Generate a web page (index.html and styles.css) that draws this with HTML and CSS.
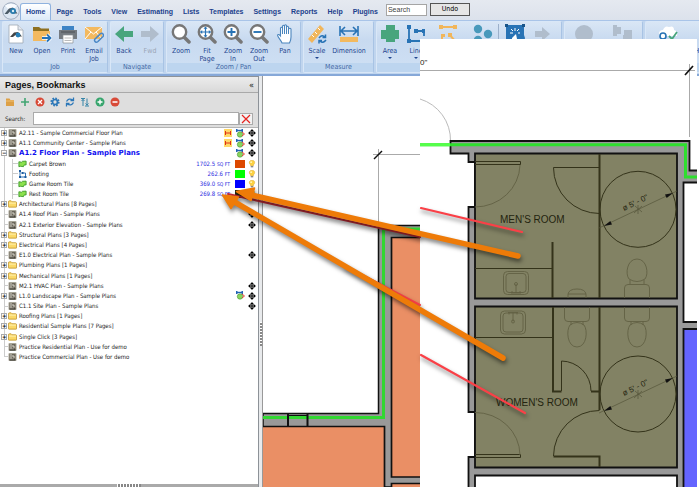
FILE: index.html
```html
<!DOCTYPE html>
<html lang="en">
<head>
<meta charset="utf-8">
<title>Sample Plans</title>
<link rel="stylesheet" href="styles.css">
</head>
<body>
<svg class="defs" aria-hidden="true">
  <defs>
    <symbol id="page" viewBox="0 0 8 8"><rect width="8" height="8" rx="1" fill="#a9a698"/><path d="M1 1h6v6H1z" fill="#6c675b"/><path d="M2.500 1v6M4.500 2v2h2M4.500 7V5.500" stroke="#e4e1d6" fill="none" stroke-width=".9"/><path d="M1 7h6" stroke="#292620"/></symbol>
    <symbol id="folder" viewBox="0 0 10 8"><path d="M.5 7V1.500Q.5.5 1.500.5H3.500L4.500 1.500H8.500Q9.500 1.500 9.500 2.500V7Q9.500 7.500 9 7.500H1Q.5 7.500.5 7Z" fill="#fbd968" stroke="#b98a1d" stroke-width=".8"/><path d="M1.200 3H8.800" stroke="#fff3b8"/></symbol>
    <symbol id="area" viewBox="0 0 10 8"><path d="M1 1.500 4 2 5 1 9 .8 9 5 7 5 6 7 3 6.500 1 7Z" fill="#8be04c" stroke="#3f9b2f"/></symbol>
    <symbol id="line" viewBox="0 0 8 8"><path d="M1.500 1V7H7M4 3H7V6" fill="none" stroke="#2b6fb5"/><path d="M.5 0h2v2h-2zM.5 6h2v2h-2zM6 6h2v2h-2zM3 2h2v2H3z" fill="#1c5c9f"/></symbol>
    <symbol id="scaled" viewBox="0 0 8 8"><rect width="8" height="8" fill="#ffd968"/><path d="M1.500 2v4M6.500 2v4M1.500 4h5" stroke="#e03218"/></symbol>
    <symbol id="takeoff" viewBox="0 0 9 9"><path d="M1 1.500H6" stroke="#2264b4" stroke-width="1.400"/><path d="M0 0h1.500v3H0zM5.500 0H7v3H5.500z" fill="#2264b4"/><circle cx="4" cy="5.500" r="2.700" fill="#8ad45b" stroke="#48943c" stroke-width=".6"/><path d="m6 3 2.500 2L6 7" stroke="#e83b32" fill="none"/></symbol>
    <symbol id="move" viewBox="0 0 8 8"><circle cx="4" cy="4" r="2.300" fill="none" stroke="#111" stroke-width=".8"/><path d="M4 1v6M1 4h6" stroke="#000"/><path d="m4 0 1.600 2H2.400ZM4 8 2.400 6h3.200ZM0 4l2-1.600v3.200ZM8 4 6 5.600V2.400Z"/></symbol>
    <symbol id="bulb" viewBox="0 0 8 9"><path d="M4 .3C.6.3.2 3.600 2.400 5.400V6.500H5.600V5.400C7.800 3.600 7.400.3 4 .3Z" fill="#fdd343" stroke="#d69b17" stroke-width=".5"/><circle cx="3" cy="2.500" r="1" fill="#fff6c4"/><path d="M2.600 7.500h2.800" stroke="#8a8a8a" stroke-width="1.600"/></symbol>
    <symbol id="lens" viewBox="0 0 20 20"><path d="m13 13 5 5" stroke="#777" stroke-width="3.500" stroke-linecap="round"/><circle cx="8.500" cy="8" r="6.700" fill="#fff" stroke="#777" stroke-width="2.400"/></symbol>
  </defs>
</svg>

<header class="top">
  <div class="menubar">
    <svg class="logo" viewBox="0 0 18 18" aria-hidden="true"><circle cx="9" cy="9" r="8.300" fill="#dce6f2" stroke="#8d9bb0" stroke-width=".8"/><path d="M3 3.500Q9 0 15 3.500L12 7H6Z" fill="#f8fbff"/><path d="M2.500 12 7 6.500 11 5.500 15.500 11.500H11Q9 11 8 9.500L5.500 12Z" fill="#4b5a66"/><circle cx="11" cy="9" r="3" fill="#297cae"/><circle cx="11" cy="9" r="1.200" fill="#dcecf5"/></svg>
    <nav class="menu">
      <a class="tab" href="#">Home</a><a href="#">Page</a><a href="#">Tools</a><a href="#">View</a><a href="#">Estimating</a><a href="#">Lists</a><a href="#">Templates</a><a href="#">Settings</a><a href="#">Reports</a><a href="#">Help</a><a href="#">Plugins</a>
    </nav>
    <input class="find" type="text" placeholder="Search" aria-label="Search commands">
    <button class="undo" type="button">Undo</button>
  </div>
  <div class="ribbon">
    <section class="group">
      <div class="tools">
        <button type="button"><svg viewBox="0 0 20 20"><path d="M3 1h9l5 5v13H3Z" fill="#fff" stroke="#9fa8b4" stroke-width=".8"/><path d="M12 1v5h5" fill="#e4e8ee" stroke="#9fa8b4" stroke-width=".8"/><path d="M4 13 8 8.500 12 8 16 12.500H11L9.500 11 7 13Z" fill="#444"/><circle cx="12" cy="11" r="2.400" fill="#2780b8"/></svg><span>New</span></button>
        <button type="button"><svg viewBox="0 0 20 20"><path d="M1 7V3H7L9 4.500H17V8Z" fill="#8f7020"/><path d="M1 7H18V17H1Z" fill="#f3b95f"/><path d="M10 14h8M15 10.500l3.500 3.500-3.500 3.500" stroke="#fff" stroke-width="3.600" fill="none"/><path d="M10 14h8M15 10.500l3.500 3.500-3.500 3.500" stroke="#2673b9" stroke-width="1.800" fill="none"/></svg><span>Open</span></button>
        <button type="button"><svg viewBox="0 0 20 20"><path d="M4 2h12v4H4z" fill="#3d84c6"/><path d="M1 6h18v9H1z" fill="#747a80"/><path d="M3 8h14" stroke="#4c5055"/><path d="M5 11h10v8H5z" fill="#fff" stroke="#8a8f94" stroke-width=".7"/><path d="M6.500 14h7M6.500 16.500h7" stroke="#bbb"/></svg><span>Print</span></button>
        <button type="button"><svg viewBox="0 0 20 20"><path d="M1 3h17v12H1z" fill="#f3b95f"/><path d="m1 3 8.500 7L18 3M1 15l6-7M18 15l-6-7" fill="none" stroke="#fff" stroke-width="1"/><path d="m12 14 4-4q2-1.500 3 0 1 1.200 0 2.500l-5 5q-2 1.500-3 0-1-1.200 0-2.500l4.500-4" fill="none" stroke="#4a87c5" stroke-width="1.500"/></svg><span>Email<br>Job</span></button>
      </div><h2>Job</h2>
    </section>
    <section class="group">
      <div class="tools">
        <button type="button"><svg viewBox="0 0 20 20"><path d="m1 10 9-8v5h9v6h-9v5Z" fill="#48a57d"/></svg><span>Back</span></button>
        <button type="button" class="off"><svg viewBox="0 0 20 20"><path d="m19 10-9-8v5H1v6h9v5Z" fill="#b0bdcc"/></svg><span>Fwd</span></button>
      </div><h2>Navigate</h2>
    </section>
    <section class="group wide">
      <div class="tools">
        <button type="button"><svg viewBox="0 0 20 20"><use href="#lens"/></svg><span>Zoom</span></button>
        <button type="button"><svg viewBox="0 0 20 20"><use href="#lens"/><path d="M8.500 3v10M3.500 8h10" stroke="#2873b5" stroke-width="1.200"/><path d="m8.500 2.500 2 2.200h-4ZM8.500 13.500l-2-2.200h4ZM3 8l2.200-2v4ZM14 8l-2.200 2V6Z" fill="#2873b5"/></svg><span>Fit<br>Page</span></button>
        <button type="button"><svg viewBox="0 0 20 20"><use href="#lens"/><path d="M8.500 4v8M4.500 8h8" stroke="#2873b5" stroke-width="1.900"/></svg><span>Zoom<br>In</span></button>
        <button type="button"><svg viewBox="0 0 20 20"><use href="#lens"/><path d="M4.500 8h8" stroke="#2873b5" stroke-width="1.900"/></svg><span>Zoom<br>Out</span></button>
        <button type="button"><svg viewBox="0 0 20 20"><path d="M7 19C6 16 2.500 13 2.500 11q1-1.500 3 1V4q1-1.500 2 0V2q1-1.500 2 0V1.500q1-1.500 2 0V3q1-1.500 2 0V5q1.500-1.500 2.500 0V13Q16 16 14.500 19Z" fill="#fff" stroke="#4c86bd" stroke-width="1.100"/><path d="M7.500 4v6M9.500 2v8M11.500 3v7M13.500 5v5" stroke="#4c86bd"/></svg><span>Pan</span></button>
      </div><h2>Zoom / Pan</h2>
    </section>
    <section class="group measure">
      <div class="tools">
        <button type="button"><svg viewBox="0 0 20 20"><path d="m1 15 12-14 4 4L5 19Z" fill="#f1b65b"/><path d="m5 11 2 2m1-5 2 2m1-6 2 2" stroke="#fff"/><path d="M12 14q3-4 6-1M18.500 10.500v3h-3M19 16q-3 4-6 1M12 19.500v-3h3" fill="none" stroke="#2873b5" stroke-width="1.500"/></svg><span>Scale</span><i></i></button>
        <button type="button" class="long"><svg viewBox="0 0 20 20"><path d="M1 2v10M19 2v10M2 7h16M6 3 2 7l4 4M14 3l4 4-4 4" fill="none" stroke="#2873b5" stroke-width="1.600"/><path d="M1 13h18v5H1z" fill="#f3b95f"/></svg><span>Dimension</span></button>
      </div><h2>Measure</h2>
    </section>
    <section class="group takeoffs">
      <div class="tools">
        <button type="button"><svg viewBox="0 0 20 20"><path d="M6 1h9v5h4v9h-4v3H6v-3H1V6h5Z" fill="#48a57d"/></svg><span>Area</span><i></i></button>
        <button type="button"><svg viewBox="0 0 20 20"><path d="M3 2v15h15M9 7h9v5" fill="none" stroke="#2873b5" stroke-width="1.800"/><path d="M1 1h4v4H1zM1 15h4v4H1zM16 15h3v4h-3zM8 5h4v4H8zM16 5h3v4h-3z" fill="#2873b5"/></svg><span>Line</span><i></i></button>
        <button type="button" class="long" aria-label="Segment"><svg viewBox="0 0 20 20"><path d="M2 3h16M4 16v-5M11 10l6 7" stroke="#f1b65b" stroke-width="2"/><path d="M1 1h4v4H1zM15 1h4v4h-4zM3 10h4v3H3zM10 9h4v4h-4z" fill="#f1b65b"/></svg></button>
        <button type="button" class="ruled" aria-label="Count"><svg viewBox="0 0 20 20"><g fill="#4899bb"><circle cx="5" cy="5" r="4.200"/><circle cx="15" cy="10" r="4.200"/><circle cx="5" cy="16" r="4.200"/></g></svg></button>
        <button type="button" aria-label="Single Click"><svg viewBox="0 0 20 20"><path d="M1 1h18v10l1 3-1 5H1Z" fill="#2873b5"/><path d="M0 0h3v3H0zM17 0h3v3h-3z" fill="#195489"/><path d="M10 4v3M6 5l2 2M14 5l-2 2M5 9h3M15 9h-2" stroke="#fff"/><path d="M7 19v-5l4-4 1 5v4Z" fill="#fff"/></svg></button>
        <button type="button" aria-label="Next"><svg viewBox="0 0 20 20"><path d="m19 10-8-7v4H4v6h7v4Z" fill="#b0bdcc"/></svg></button>
      </div><h2></h2>
    </section>
    <section class="group shapes">
      <div class="tools">
        <button type="button" class="long" aria-label="Circle"><svg viewBox="0 0 20 20"><circle cx="10" cy="10" r="9" fill="#b0bdcc"/></svg></button>
        <button type="button" class="long" aria-label="Shapes"><svg viewBox="0 0 20 20"><path d="M1 1h4v2h4v7H5v2H1zM12 6h8v12h-9v-7h1z" fill="#b0bdcc"/></svg></button>
      </div><h2></h2>
    </section>
    <section class="group last">
      <div class="tools">
        <button type="button" class="long" aria-label="Cloud"><svg viewBox="0 0 20 20"><path d="M1 10Q1 6 5 6 7 1 11 3 16 1 16 6q4 1 3 6H1Z" fill="#fff"/><circle cx="5" cy="12" r="3" fill="#fff" stroke="#2873b5" stroke-width="1.600"/><path d="m11 12 3 3 5-7" fill="none" stroke="#48a57d" stroke-width="1.800"/></svg></button>
        <button type="button" class="cut"><span>H</span></button>
      </div><h2></h2>
    </section>
  </div>
</header>

<main class="work">
  <aside class="side">
    <div class="panel">
      <div class="head"><h1>Pages, Bookmarks</h1><button type="button" aria-label="Collapse panel">«</button></div>
      <div class="bar">
        <button type="button" aria-label="New folder"><svg viewBox="0 0 10 10"><path d="M1 9V1.500h3.500L5.500 3H9v6Z" fill="#dda046"/><path d="M1 4h8" stroke="#f3cd86" stroke-width=".7"/></svg></button>
        <button type="button" aria-label="Add"><svg viewBox="0 0 10 10"><path d="M5 1v8M1 5h8" stroke="#43a573" stroke-width="1.600"/></svg></button>
        <button type="button" aria-label="Delete"><svg viewBox="0 0 10 10"><circle cx="5" cy="5" r="4.500" fill="#d84a38"/><path d="m3 3 4 4M7 3 3 7" stroke="#fff" stroke-width="1.300"/></svg></button>
        <button type="button" aria-label="Settings"><svg viewBox="0 0 10 10"><circle cx="5" cy="5" r="3.600" fill="none" stroke="#2b77b8" stroke-width="2" stroke-dasharray="1.600 1.200"/><circle cx="5" cy="5" r="2.500" fill="none" stroke="#2b77b8" stroke-width="1.700"/></svg></button>
        <button type="button" aria-label="Refresh"><svg viewBox="0 0 10 10"><path d="M1.500 4.500Q3.500.5 8 3M8.500.5V3.500H5.500M8.500 5.500Q6.500 9.500 2 7M1.500 9.500V6.500H4.500" fill="none" stroke="#2b77b8" stroke-width="1.300"/></svg></button>
        <button type="button" aria-label="Sort"><svg viewBox="0 0 10 10"><path d="M1 1.500h4M3 2v7M5 9h4M7 8.500V1.500M1.500 4 3 2.500 4.500 4M5.500 6.500 7 8l1.500-1.500" fill="none" stroke="#3785a8" stroke-width="1"/></svg></button>
        <button type="button" aria-label="Expand all"><svg viewBox="0 0 10 10"><circle cx="5" cy="5" r="4.500" fill="#38a56d"/><path d="M5 2.500v5M2.500 5h5" stroke="#fff" stroke-width="1.400"/></svg></button>
        <button type="button" aria-label="Collapse all"><svg viewBox="0 0 10 10"><circle cx="5" cy="5" r="4.500" fill="#d84a38"/><path d="M2.500 5h5" stroke="#fff" stroke-width="1.500"/></svg></button>
      </div>
      <div class="search"><label for="q">Search:</label><input id="q" type="text"><button type="button" aria-label="Clear search"><svg viewBox="0 0 10 10"><path d="m1 1 8 8M9 1 1 9" stroke="#e52420" stroke-width="1.200"/></svg></button></div>
      <ul class="tree">
        <li><b class="ex">+</b><svg class="pg"><use href="#page"/></svg><span>A2.11 - Sample Commercial Floor Plan</span><svg class="st"><use href="#scaled"/></svg><svg class="tk"><use href="#takeoff"/></svg><svg class="mv"><use href="#move"/></svg></li>
        <li><b class="ex">+</b><svg class="pg"><use href="#page"/></svg><span>A1.1 Community Center - Sample Plans</span><svg class="st"><use href="#scaled"/></svg><svg class="tk"><use href="#takeoff"/></svg><svg class="mv"><use href="#move"/></svg></li>
        <li class="open"><b class="ex">−</b><svg class="pg"><use href="#page"/></svg><span>A1.2 Floor Plan - Sample Plans</span><svg class="tk"><use href="#takeoff"/></svg><svg class="mv"><use href="#move"/></svg></li>
        <li class="sub"><svg class="ar"><use href="#area"/></svg><span>Carpet Brown</span><em>1702.5 <small>SQ FT</small></em><i class="sw brown"></i><svg class="mv"><use href="#bulb"/></svg></li>
        <li class="sub"><svg class="ar"><use href="#line"/></svg><span>Footing</span><em>262.6 <small>FT</small></em><i class="sw green"></i><svg class="mv"><use href="#bulb"/></svg></li>
        <li class="sub"><svg class="ar"><use href="#area"/></svg><span>Game Room Tile</span><em>369.0 <small>SQ FT</small></em><i class="sw blue"></i><svg class="mv"><use href="#bulb"/></svg></li>
        <li class="sub"><svg class="ar"><use href="#area"/></svg><span>Rest Room Tile</span><em>269.8 <small>SQ FT</small></em><i class="sw dark"></i><svg class="mv"><use href="#bulb"/></svg></li>
        <li><b class="ex">+</b><svg class="pg"><use href="#folder"/></svg><span>Architectural Plans [8 Pages]</span></li>
        <li><b class="tw"></b><svg class="pg"><use href="#page"/></svg><span>A1.4 Roof Plan - Sample Plans</span><svg class="mv"><use href="#move"/></svg></li>
        <li><b class="tw"></b><svg class="pg"><use href="#page"/></svg><span>A2.1 Exterior Elevation - Sample Plans</span><svg class="mv"><use href="#move"/></svg></li>
        <li><b class="ex">+</b><svg class="pg"><use href="#folder"/></svg><span>Structural Plans [3 Pages]</span></li>
        <li><b class="ex">+</b><svg class="pg"><use href="#folder"/></svg><span>Electrical Plans [4 Pages]</span></li>
        <li><b class="tw"></b><svg class="pg"><use href="#page"/></svg><span>E1.0 Electrical Plan - Sample Plans</span><svg class="mv"><use href="#move"/></svg></li>
        <li><b class="ex">+</b><svg class="pg"><use href="#folder"/></svg><span>Plumbing Plans [1 Pages]</span></li>
        <li><b class="ex">+</b><svg class="pg"><use href="#folder"/></svg><span>Mechanical Plans [1 Pages]</span></li>
        <li><b class="tw"></b><svg class="pg"><use href="#page"/></svg><span>M2.1 HVAC Plan - Sample Plans</span><svg class="mv"><use href="#move"/></svg></li>
        <li><b class="ex">+</b><svg class="pg"><use href="#page"/></svg><span>L1.0 Landscape Plan - Sample Plans</span><svg class="tk"><use href="#takeoff"/></svg><svg class="mv"><use href="#move"/></svg></li>
        <li><b class="tw"></b><svg class="pg"><use href="#page"/></svg><span>C1.1 Site Plan - Sample Plans</span><svg class="mv"><use href="#move"/></svg></li>
        <li><b class="ex">+</b><svg class="pg"><use href="#folder"/></svg><span>Roofing Plans [1 Pages]</span></li>
        <li><b class="ex">+</b><svg class="pg"><use href="#folder"/></svg><span>Residential Sample Plans [7 Pages]</span></li>
        <li><b class="ex">+</b><svg class="pg"><use href="#folder"/></svg><span>Single Click [3 Pages]</span></li>
        <li><b class="tw"></b><svg class="pg"><use href="#page"/></svg><span>Practice Residential Plan - Use for demo</span></li>
        <li><b class="tw"></b><svg class="pg"><use href="#page"/></svg><span>Practice Commercial Plan - Use for demo</span></li>
      </ul>
      <div class="foot"><span class="grip"></span></div>
    </div>
    <div class="split"><span class="grip up"></span></div>
  </aside>
  <section class="plan">
    <svg viewBox="263 76 436 411" preserveAspectRatio="xMinYMin slice" role="img" aria-label="Floor plan">
      <path d="M373 154.500H421M378.500 149V225" stroke="#aaa" fill="none"/>
      <path d="m374 159 8-8" stroke="#111" stroke-width="1.500"/>
      <path d="M378.500 225.500H421V487H263V413.500H378.500Z" fill="#999" stroke="#111" stroke-width="1.500"/>
      <path d="M391.500 237.500H425V477H391.500ZM391.500 483.500H425V492H391.500ZM260 426.500H384.500V492H260Z" fill="#ea8f65" stroke="#111" stroke-width="1.700"/>
      <path d="M421 229H383.500V417.500H263" stroke="#32d732" stroke-width="3" fill="none"/>
      <path d="M288 413v13M307.500 413v13" stroke="#111" stroke-width="2"/><path d="M289 415.500h18" stroke="#111"/>
    </svg>
  </section>
</main>

<svg class="detail" viewBox="420 39 277 448" role="img" aria-label="Rest room detail">
  <path d="M420 39H697V487H420Z" fill="#fff"/>
  <text x="420" y="65" class="dim">0"</text>
  <path d="M420 70.500H695M689.500 64V137" stroke="#aaa"/><path d="m685 75 8-9" stroke="#111" stroke-width="1.700"/>
  <path d="M420 99A43 43 0 0 1 450.500 141" stroke="#bbb" fill="none"/>
  <g stroke="#111" stroke-width="1.800" fill="#999">
    <path d="M450.500 141H689.500V170.500H700V490H468.500V457H475V412H468.500V207H475V162H468.500V153.500H450.500Z"/>
    <path d="M683.500 182.500H700V322H683.500ZM475 475.500H677V492H475Z" fill="#fff"/>
    <path d="M683.500 329H700V492H683.500Z" fill="#6464ff"/>
    <path d="M475 153.500H677V298.500H475ZM475 306.500H677V467.500H475Z" fill="#828264"/>
  </g>
  <path d="M420 144.700H685.500V177H697" stroke="#2edf2e" stroke-width="3" fill="none"/>
  <path d="M420 144.700H450" stroke="#55ff4a" stroke-width="3"/>
  <g fill="none" stroke="#34331a">
    <path d="M599.500 154V298M552.500 242V298M553 307V391.500H561.500M591 391.500H599.500M599.500 307V410M553.500 456.500H599.500V467" stroke-width="2"/>
    <path d="M553.500 167.500H599.500M553.500 167.500A46 46 0 0 0 599.500 213.500M475 268.500H552M475 337.500H552M561.500 391V361A30 30 0 0 1 591 391M599.500 410.500A46 46 0 0 0 553.500 456M475 161.500H520.500V164.500H475M475 454.500H520.500V457.500H475"/>
    <circle cx="638" cy="209.300" r="38"/><circle cx="638" cy="394" r="38"/>
  </g>
  <g fill="none" stroke="#626144" stroke-width=".9">
    <path d="M520 165A45 43 0 0 1 475 207M475 412.500A45 43 0 0 1 520 455"/>
    <g id="sink"><rect x="503.500" y="271.500" width="25" height="23" rx="4"/><rect x="506" y="273.500" width="20" height="19" rx="3"/><circle cx="516" cy="284" r="1.500"/><path d="M516 284v9M511 293h10M512 291v2M520 291v2"/></g>
    <use href="#sink" transform="matrix(1 0 0 -1 -3 605.500)"/>
    <path d="M568 298V294Q569 289 577 289T586 294V298M568 294H586"/>
    <path d="M637 259C627 259 625 274 629 279Q637 284 645 279C649 274 647 259 637 259ZM630 280V284M644 280V284M624.500 298V288Q624.500 284.500 628 284.500H646Q649.500 284.500 649.500 288V298"/>
    <g id="wc"><path d="M624.500 307V318Q624.500 321.500 628 321.500H646Q649.500 321.500 649.500 318V307M631 321.500V325M643 321.500V325M637 347C627 347 626 330 630 325Q637 320 644 325C648 330 647 347 637 347Z"/></g>
    <use href="#wc" x="-60"/>
  </g>
  <g id="dia"><path d="M599 228 677 191M635 206l7 6M638 205v9M634 213l8-7" stroke="#55543a" stroke-width=".7"/><path d="m604 226 8-1.500-1.700-3.500ZM673 193l-8 1.500 1.700 3.500Z" fill="#111"/><text class="dim" transform="translate(624 211) rotate(-26)">ø 5' - 0"</text></g>
  <use href="#dia" y="185"/>
  <text class="room" x="500" y="223">MEN'S ROOM</text>
  <text class="room" x="496" y="406">WOMEN'S ROOM</text>
</svg>

<svg class="notes" viewBox="0 0 699 487" aria-hidden="true">
  <g class="shade" fill="none" stroke-linecap="round">
    <path d="M228 194 420 237" stroke="#c52b38" stroke-width="2.200"/>
    <path d="M345 266 420 305" stroke="#fa4047" stroke-width="2"/>
    <path d="m421 208 101 24M421 355l104 58" stroke="#fa4047" stroke-width="2.200"/>
  </g>
  <g class="shade" fill="#ee7b08" stroke="#ee7b08" stroke-linecap="round">
    <path d="M249 194.500 518 256M232 200.500 503 358" stroke-width="5.500"/>
    <path d="m236.500 191.500 18-3.500-3.500 12.500ZM222.500 195l16 2-7.500 11.500Z" stroke-width="1.500" stroke-linejoin="round"/>
  </g>
</svg>
</body>
</html>
```
FILE: styles.css
```css
* { box-sizing: border-box; }
html, body { height: 100%; }
body {
  margin: 0;
  position: relative;
  display: flex;
  flex-direction: column;
  overflow: hidden;
  background: #fff;
  color: #222;
  font: 6px/8px "DejaVu Sans Condensed", "DejaVu Sans", sans-serif;
}
button, input { font: inherit; color: inherit; margin: 0; padding: 0; }
button { border: 0; background: none; }
h1, h2, ul { margin: 0; padding: 0; list-style: none; }
.defs { position: absolute; width: 0; height: 0; }

.menubar {
  height: 20px;
  display: flex;
  align-items: flex-end;
  padding-left: 2px;
  background: linear-gradient(#e5e9f0, #dce2ec);
}
.logo { width: 18px; height: 18px; flex: none; }
.menu { display: flex; align-items: center; }
.menu a {
  padding: 0 5px;
  color: #1c418c;
  font: bold 7px/13px "Liberation Sans", sans-serif;
  text-decoration: none;
}
.menu .tab {
  padding: 1px 5px 2px;
  border: 1px solid #8fb2df;
  border-bottom: 0;
  border-radius: 3px 3px 0 0;
  background: linear-gradient(#fff, #dce9f8);
}
.find, .undo { align-self: flex-start; margin-top: 4px; font: 7px/9px "Liberation Sans", sans-serif; }
.find { width: 41px; height: 12px; margin-left: 3px; padding: 0 1px 2px; border: 1px solid #a5a5a5; background: #fff; }
.find::placeholder { color: #444; opacity: 1; }
.undo { width: 40px; height: 13px; margin-top: 3px; margin-left: 3px; border: 1px solid #555; background: #e6e6e6; color: #000; font-family: "DejaVu Sans Condensed", sans-serif; }

.ribbon {
  height: 56px;
  display: flex;
  gap: 2px;
  padding: 1px 0 1px 2px;
  overflow: hidden;
  border-bottom: 2px solid #86a8d8;
  background: #c0d5ee;
  box-shadow: inset 0 1px #a9c4e8;
}
.group {
  flex: none;
  display: flex;
  flex-direction: column;
  border: 1px solid #d9e7f7;
  border-right-color: #a8c3e4;
  border-radius: 2px;
  background: linear-gradient(#d9e6f5, #c8daf0 35%, #cfe0f4);
}
.tools { flex: 1; display: flex; padding-top: 2px; }
.wide .tools { padding-right: 2px; padding-left: 1px; }
.measure .tools { padding-right: 5px; }
.group h2 { height: 9px; background: #bdd5ef; color: #4469a5; font: 7px/9px "DejaVu Sans Condensed", sans-serif; text-align: center; }
.tools button {
  width: 26px;
  display: flex;
  flex-direction: column;
  align-items: center;
  color: #1f4690;
  font-size: 7px;
  line-height: 8px;
}
.tools svg { width: 20px; height: 20px; margin-bottom: 3px; flex: none; }
.tools .off { color: #9aa5b5; }
.tools .long { width: 38px; }
.tools i { margin-top: 2px; border: 2px solid transparent; border-top-color: #1f4690; border-bottom: 0; }
.takeoffs { width: 186px; }
.takeoffs .ruled { border-right: 1px solid #9cb0ca; margin-right: 3px; width: 32px; }
.shapes { width: 79px; }
.last { width: 70px; }
.last .long { width: 47px; }
.last .cut { align-items: flex-start; padding: 23px 0 0 5px; }

.work { flex: 1; min-height: 0; display: flex; }
.side { width: 263px; flex: none; display: flex; }
.panel { flex: 1; min-width: 0; display: flex; flex-direction: column; border: 1px solid #8d9298; border-width: 1px 1px 0 0; background: #fff; }
.split { width: 4px; display: flex; align-items: center; justify-content: center; padding-top: 104px; background: #e8eaec; border-right: 1px solid #999; }
.head { height: 16px; display: flex; align-items: center; justify-content: space-between; padding: 0 4px 0 5px; border-bottom: 1px solid #a9a9a9; background: linear-gradient(#ececec, #d9d9d9); color: #111; }
.head h1 { font: bold 9px/12px "Liberation Sans", sans-serif; }
.head button { font-size: 9px; line-height: 12px; }
.bar { height: 17px; display: flex; align-items: center; gap: 5px; padding-left: 5px; background: #dedede; }
.bar button { width: 10px; height: 10px; }
.bar svg { display: block; width: 10px; height: 10px; }
.search { height: 18px; display: flex; align-items: center; padding: 0 5px 0 5px; background: #dedede; border-bottom: 1px solid #b5b5b5; }
.search label { width: 28px; }
.search input { flex: 1; min-width: 0; height: 13px; border: 1px solid #aaa; background: #fff; }
.search button { width: 14px; height: 12px; border: 1px solid #aaa; background: #f3f3f3; }
.search svg { display: block; width: 10px; height: 10px; margin: 0 auto; }

.tree { height: 234px; display: grid; grid-auto-rows: 1fr; background: linear-gradient(#ccc, #ccc) 4px 0 / 1px 228px no-repeat; }
.tree li { display: flex; align-items: center; padding: 0 2px 0 1px; min-width: 0; }
.tree span { flex: 1; white-space: nowrap; padding-left: 2px; }
.tree svg { flex: none; }
.ex { width: 6px; height: 6px; flex: none; border: 1px solid #aaa; background: #fff; color: #000; font-size: 6px; line-height: 4px; text-align: center; }
.tw { width: 4px; height: 1px; flex: none; margin-left: 3px; background: #ccc; }
.ex + .pg { margin-left: 1px; }
.pg { width: 9px; height: 8px; }
.open span { color: #1010f0; font: bold 7px/9px "DejaVu Sans", sans-serif; }
.sub { background: linear-gradient(#ccc, #ccc) 12px 50% / 6px 1px no-repeat, linear-gradient(#ccc, #ccc) 12px 0 / 1px 100% no-repeat; }
.ar { width: 9px; height: 8px; margin-left: 17px; }
.st { width: 8px; height: 8px; margin-right: 4px; }
.tk { width: 9px; height: 9px; margin-right: 3px; }
.mv { width: 8px; height: 8px; }
.sub em { color: #2a2ae0; font-style: normal; margin-right: 5px; }
.sub small { font-size: 5px; }
.sw { width: 10px; height: 8px; margin-right: 3px; }
.brown { background: #dc4800; }
.green { background: #0f0; }
.blue { background: #00f; }
.dark { background: #28280c; }
.foot { margin-top: auto; height: 3px; padding-left: 117px; background: #aaa; }
.grip { display: block; width: 24px; height: 3px; background: repeating-linear-gradient(90deg, #fff 0 1px, #888 1px 3px); }
.grip.up { width: 2px; height: 24px; background: repeating-linear-gradient(#fff 0 1px, #888 1px 3px); }

.plan { flex: 1; min-width: 0; }
.plan svg { display: block; width: 100%; height: 100%; }
.detail { position: absolute; left: 420px; top: 39px; width: 277px; height: 448px; overflow: hidden; }
.notes { position: absolute; left: 0; top: 0; width: 699px; height: 487px; pointer-events: none; }
.shade { filter: drop-shadow(1px 3px 2px rgba(0, 0, 0, .5)); }
.dim { font: 8px "Liberation Sans", sans-serif; fill: #24240f; }
.room { font: 10px "Liberation Sans", sans-serif; fill: #24240f; }
```
